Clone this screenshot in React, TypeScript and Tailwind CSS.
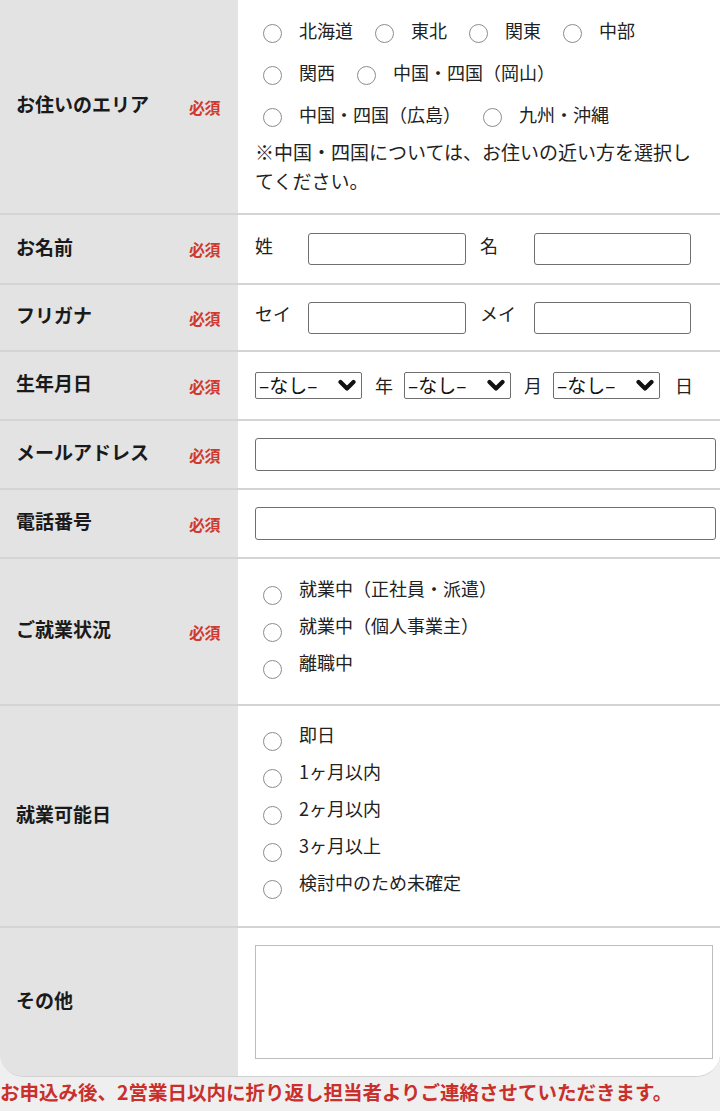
import React from 'react';

const Radio: React.FC<{ className?: string }> = ({ className = '' }) => (
  <span className={`inline-block w-[19px] h-[19px] shrink-0 rounded-full border-[1.5px] border-[#8c8c8c] bg-white ${className}`} />
);

const Required: React.FC = () => (
  <span className="text-[16px] font-bold text-[#cf3a30] tracking-[-0.5px]">必須</span>
);

const Row: React.FC<{
  label: string;
  required?: boolean;
  rowClass: string;
  children: React.ReactNode;
}> = ({ label, required, rowClass, children }) => (
  <div className={`flex ${rowClass}`}>
    <div className="w-[238px] shrink-0 bg-[#e3e3e3] flex items-center justify-between pl-4 pr-[18px]">
      <span className="text-[19px] font-bold text-[#1a1a1a] -mt-1">{label}</span>
      {required && <Required />}
    </div>
    <div className="flex-1 bg-white pl-[17px] pr-1">{children}</div>
  </div>
);

const AreaOption: React.FC<{ text: string }> = ({ text }) => (
  <div className="flex items-center">
    <Radio className="ml-2 mt-[6px]" />
    <span className="ml-[17px] text-[18px] text-[#222]">{text}</span>
  </div>
);

const ListOption: React.FC<{ text: string }> = ({ text }) => (
  <div className="flex items-start">
    <Radio className="ml-2 mt-[10px]" />
    <span className="ml-[17px] text-[18px] leading-[24px] text-[#222]">{text}</span>
  </div>
);

const FakeSelect: React.FC = () => (
  <div className="w-[107px] h-[27px] border border-[#6f6f6f] rounded-[2px] flex items-center justify-between pl-[3px] pr-[5px] bg-white">
    <span className="text-[19px] leading-none text-[#111] -mt-[2px]">–なし–</span>
    <svg width="18" height="13" viewBox="0 0 18 13">
      <polyline points="2.5,3 9,9.5 15.5,3" fill="none" stroke="#111" strokeWidth="4.2" strokeLinecap="round" strokeLinejoin="round" />
    </svg>
  </div>
);

const TextBox: React.FC<{ className: string }> = ({ className }) => (
  <div className={`border border-[#6f6f6f] rounded-[3px] bg-white ${className}`} />
);

export default function App() {
  return (
    <div className="min-h-[1111px] bg-[#efefef] font-['Noto_Sans_CJK_JP',sans-serif]">
      <div className="rounded-b-[24px] overflow-hidden border-b border-[#d0d0d0]">
        <Row label="お住いのエリア" required rowClass="h-[213px]">
          <div className="pt-[9px]">
            <div className="flex h-[42px] items-center gap-[14px]">
              <AreaOption text="北海道" />
              <AreaOption text="東北" />
              <AreaOption text="関東" />
              <AreaOption text="中部" />
            </div>
            <div className="flex h-[42px] items-center gap-[14px]">
              <AreaOption text="関西" />
              <AreaOption text="中国・四国（岡山）" />
            </div>
            <div className="flex h-[42px] items-center gap-[14px]">
              <AreaOption text="中国・四国（広島）" />
              <AreaOption text="九州・沖縄" />
            </div>
            <p className="mt-[2px] pr-4 text-[19px] leading-[29px] text-[#222]">
              ※中国・四国については、お住いの近い方を選択してください。
            </p>
          </div>
        </Row>

        <Row label="お名前" required rowClass="h-[70px] border-t-2 border-[#d4d4d4]">
          <div className="flex items-center h-full">
            <span className="w-[53px] text-[18px] text-[#222] -mt-2">姓</span>
            <TextBox className="w-[158px] h-[32px]" />
            <span className="ml-[14px] w-[54px] text-[18px] text-[#222] -mt-2">名</span>
            <TextBox className="w-[157px] h-[32px]" />
          </div>
        </Row>

        <Row label="フリガナ" required rowClass="h-[67px] border-t-2 border-[#d4d4d4]">
          <div className="flex items-center h-full">
            <span className="w-[53px] text-[18px] text-[#222] -mt-2">セイ</span>
            <TextBox className="w-[158px] h-[32px]" />
            <span className="ml-[14px] w-[54px] text-[18px] text-[#222] -mt-2">メイ</span>
            <TextBox className="w-[157px] h-[32px]" />
          </div>
        </Row>

        <Row label="生年月日" required rowClass="h-[69px] border-t-2 border-[#d4d4d4]">
          <div className="flex items-center h-full text-[18px] text-[#222]">
            <FakeSelect />
            <span className="ml-[13px] mr-[11px]">年</span>
            <FakeSelect />
            <span className="ml-[13px] mr-[11px]">月</span>
            <FakeSelect />
            <span className="ml-[15px]">日</span>
          </div>
        </Row>

        <Row label="メールアドレス" required rowClass="h-[69px] border-t-2 border-[#d4d4d4]">
          <div className="flex items-center h-full">
            <TextBox className="w-full h-[33px]" />
          </div>
        </Row>

        <Row label="電話番号" required rowClass="h-[69px] border-t-2 border-[#d4d4d4]">
          <div className="flex items-center h-full">
            <TextBox className="w-full h-[33px]" />
          </div>
        </Row>

        <Row label="ご就業状況" required rowClass="h-[147px] border-t-2 border-[#d4d4d4]">
          <div className="flex flex-col justify-center gap-[8px] h-full pb-[8px]">
            <ListOption text="就業中（正社員・派遣）" />
            <ListOption text="就業中（個人事業主）" />
            <ListOption text="離職中" />
          </div>
        </Row>

        <Row label="就業可能日" rowClass="h-[222px] border-t-2 border-[#d4d4d4]">
          <div className="flex flex-col justify-center gap-[8px] h-full pb-[11px]">
            <ListOption text="即日" />
            <ListOption text="1ヶ月以内" />
            <ListOption text="2ヶ月以内" />
            <ListOption text="3ヶ月以上" />
            <ListOption text="検討中のため未確定" />
          </div>
        </Row>

        <Row label="その他" rowClass="h-[150px] border-t-2 border-[#d4d4d4]">
          <div className="pt-[17px] pr-[3px]">
            <div className="h-[114px] border border-[#bdbdbd] bg-white" />
          </div>
        </Row>
      </div>

      <p className="mt-[3px] text-[19.5px] font-bold leading-[24px] text-[#c9302c]">
        お申込み後、2営業日以内に折り返し担当者よりご連絡させていただきます。
      </p>
    </div>
  );
}
